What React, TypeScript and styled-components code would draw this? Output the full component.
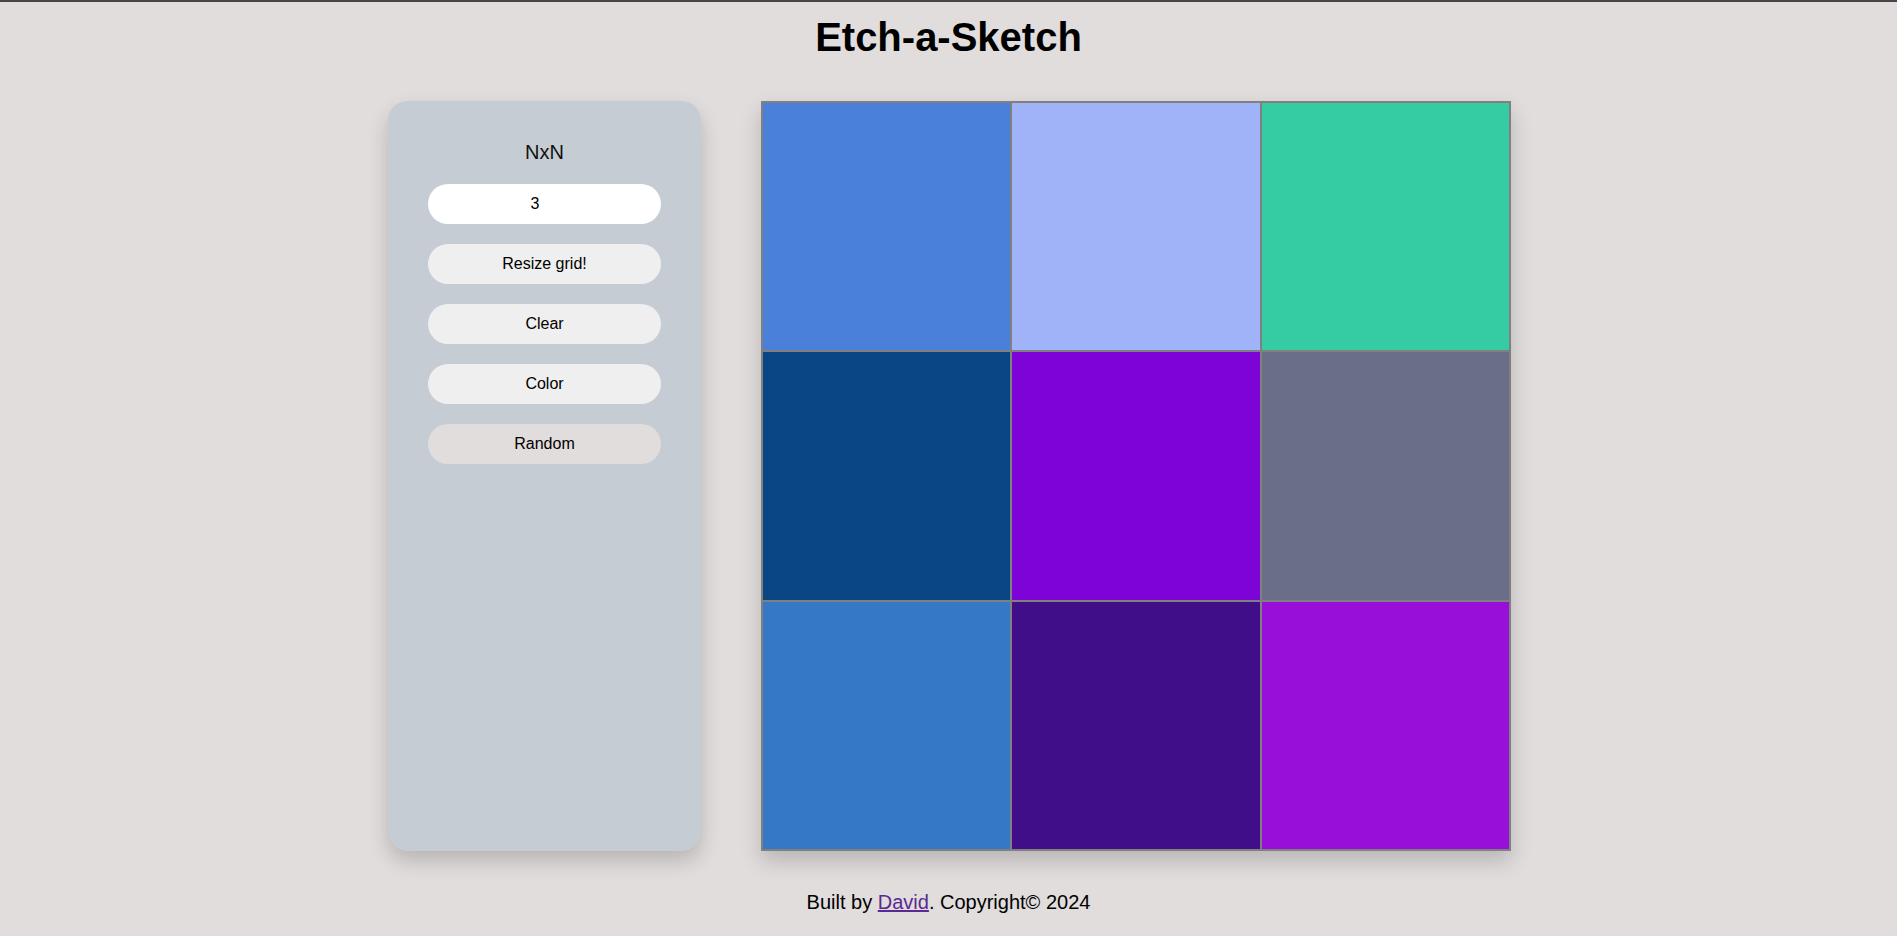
import React from "react";
import styled, { createGlobalStyle } from "styled-components";

const GlobalStyle = createGlobalStyle`
  html, body {
    margin: 0;
    padding: 0;
  }
  body {
    background: #e0dddc;
    font-family: "Liberation Sans", Arial, sans-serif;
    border-top: 2px solid #474747;
    min-height: 934px;
  }
`;

const Page = styled.div`
  display: flex;
  flex-direction: column;
  align-items: center;
`;

const Title = styled.h1`
  margin: 13px 0 41px;
  font-size: 40px;
  font-weight: 700;
  color: #000;
  line-height: normal;
`;

const Main = styled.main`
  display: flex;
  gap: 60px;
  align-items: flex-start;
  margin-left: 2px;
`;

const Panel = styled.aside`
  box-sizing: border-box;
  width: 313px;
  height: 750px;
  padding-top: 40px;
  background: #c5ccd3;
  border-radius: 20px;
  box-shadow: 0 10px 20px rgba(0, 0, 0, 0.18);
  display: flex;
  flex-direction: column;
  align-items: center;
  gap: 20px;
`;

const Label = styled.div`
  font-size: 20px;
  line-height: normal;
  color: #111;
`;

const SizeInput = styled.input`
  box-sizing: border-box;
  width: 233px;
  height: 40px;
  border: none;
  border-radius: 20px;
  background: #fff;
  padding: 0 19px 0 0;
  font-family: "Liberation Sans", Arial, sans-serif;
  font-size: 16px;
  color: #000;
  text-align: center;
  outline: none;
`;

const Btn = styled.button<{ $active?: boolean }>`
  box-sizing: border-box;
  width: 233px;
  height: 40px;
  border: none;
  border-radius: 20px;
  background: ${(p) => (p.$active ? "#e0dddc" : "#efefef")};
  font-family: "Liberation Sans", Arial, sans-serif;
  font-size: 16px;
  color: #000;
  cursor: pointer;
`;

const Grid = styled.div<{ $n: number }>`
  box-sizing: border-box;
  width: 750px;
  height: 750px;
  border: 1px solid #808080;
  display: grid;
  grid-template-columns: repeat(${(p) => p.$n}, 1fr);
  grid-template-rows: repeat(${(p) => p.$n}, 1fr);
  box-shadow: 0 10px 20px rgba(0, 0, 0, 0.18);
`;

const Cell = styled.div<{ $color: string }>`
  box-sizing: border-box;
  border: 1px solid #808080;
  background: ${(p) => p.$color};
`;

const Footer = styled.footer`
  margin-top: 40px;
  font-size: 20px;
  line-height: normal;
  color: #000;
`;

const Link = styled.a`
  color: #5a2a92;
  text-decoration: underline;
`;

const colors = [
  "#4a80da",
  "#a0b3f9",
  "#35cba3",
  "#0a4585",
  "#7d03d6",
  "#6a6e88",
  "#3578c5",
  "#400e89",
  "#970fd9",
];

export default function App() {
  return (
    <>
      <GlobalStyle />
      <Page>
        <Title>Etch-a-Sketch</Title>
        <Main>
          <Panel>
            <Label>NxN</Label>
            <SizeInput type="text" defaultValue="3" />
            <Btn>Resize grid!</Btn>
            <Btn>Clear</Btn>
            <Btn>Color</Btn>
            <Btn $active>Random</Btn>
          </Panel>
          <Grid $n={3}>
            {colors.map((c, i) => (
              <Cell key={i} $color={c} />
            ))}
          </Grid>
        </Main>
        <Footer>
          Built by <Link href="#">David</Link>. Copyright© 2024
        </Footer>
      </Page>
    </>
  );
}
